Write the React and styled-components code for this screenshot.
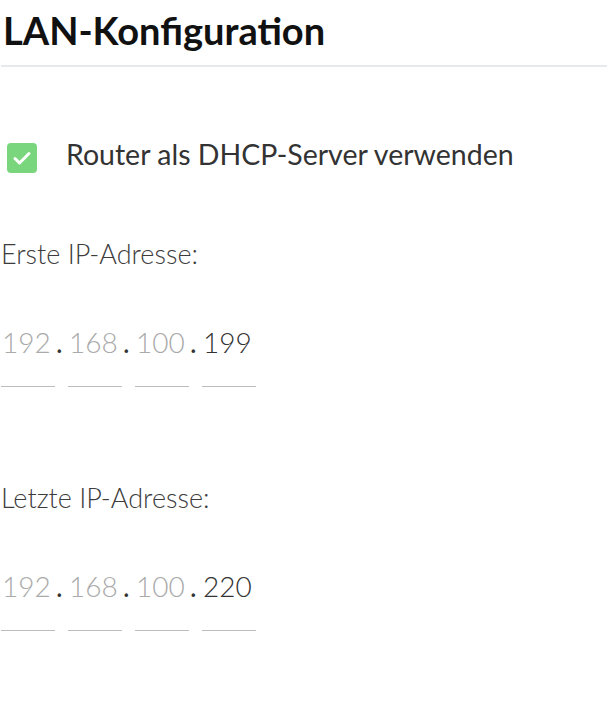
import React from 'react';
import styled, { createGlobalStyle } from 'styled-components';

const GlobalStyle = createGlobalStyle`
  body {
    margin: 0;
    background: #fff;
    font-family: Lato, 'Noto Sans', sans-serif;
  }
`;

const Page = styled.div`
  width: 607px;
  padding-left: 1px;
  box-sizing: border-box;
`;
const Header = styled.h1`
  margin: 0;
  padding: 8px 0 0 2px;
  height: 67px;
  box-sizing: border-box;
  font-size: 38px;
  line-height: 1.2;
  font-weight: 700;
  color: #111;
  border-bottom: 2px solid #e6e9ed;
`;
const CheckRow = styled.label`
  display: flex;
  align-items: flex-start;
  gap: 29px;
  margin: 70px 0 0 6px;
  font-size: 28.5px;
  line-height: 1.2;
  color: #333;
`;
const CheckBox = styled.span`
  flex: none;
  width: 30px;
  height: 30px;
  margin-top: 6px;
  border-radius: 4px;
  background: #7ad67d;
  display: flex;
`;
const Field = styled.div`
  margin-top: ${(p) => p.top}px;
`;
const Label = styled.div`
  font-size: 27px;
  line-height: 1.2;
  font-weight: 300;
  color: #3c3c3c;
`;
const IpRow = styled.div`
  display: flex;
  margin-top: 56px;
  font-size: 28px;
  line-height: 1.2;
  font-weight: 300;
`;
const Octet = styled.div`
  width: 54px;
  padding: 0 0 26px 1px;
  box-sizing: border-box;
  color: ${(p) => (p.dim ? '#aaa' : '#333')};
  border-bottom: 1px solid #bcbcbc;
`;
const Dot = styled.div`
  width: 13px;
  padding-left: 1px;
  box-sizing: border-box;
  color: #333;
  font-weight: 400;
`;

function IpInput({ parts }) {
  return (
    <IpRow>
      {parts.map((p, i) => (
        <React.Fragment key={i}>
          {i > 0 && <Dot>.</Dot>}
          <Octet dim={i < 3}>{p}</Octet>
        </React.Fragment>
      ))}
    </IpRow>
  );
}

export default function App() {
  return (
    <Page>
      <GlobalStyle />
      <Header>LAN-Konfiguration</Header>
      <CheckRow>
        <CheckBox>
          <svg width="30" height="30" viewBox="0 0 30 30">
            <path d="M8 15.5 L12.5 20 L22 10.5" fill="none" stroke="#fff" strokeWidth="3" strokeLinecap="round" strokeLinejoin="round" />
          </svg>
        </CheckBox>
        Router als DHCP-Server verwenden
      </CheckRow>
      <Field top={65}>
        <Label>Erste IP-Adresse:</Label>
        <IpInput parts={['192', '168', '100', '199']} />
      </Field>
      <Field top={95}>
        <Label>Letzte IP-Adresse:</Label>
        <IpInput parts={['192', '168', '100', '220']} />
      </Field>
    </Page>
  );
}
